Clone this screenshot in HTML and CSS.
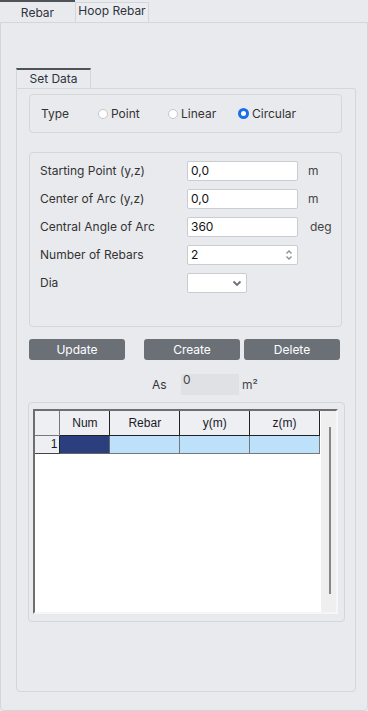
FILE: index.html
```html
<!DOCTYPE html>
<html>
<head>
<meta charset="utf-8">
<link rel="stylesheet" href="styles.css">
</head>
<body>
<div class="tabs">
  <div class="tab active">Rebar</div>
  <div class="tab">Hoop Rebar</div>
</div>
<div class="outer">
  <div class="tabs inner-tabs">
    <div class="tab active sub">Set Data</div>
  </div>
  <div class="inner">
    <div class="box type-box">
      <span class="type-label">Type</span>
      <label class="radio r1"><span class="dot"></span>Point</label>
      <label class="radio r2"><span class="dot"></span>Linear</label>
      <label class="radio r3"><span class="dot on"></span>Circular</label>
    </div>
    <div class="box data-box">
      <div class="row"><span class="lbl">Starting Point (y,z)</span><span class="field">0,0</span><span class="unit">m</span></div>
      <div class="row"><span class="lbl">Center of Arc (y,z)</span><span class="field">0,0</span><span class="unit">m</span></div>
      <div class="row"><span class="lbl">Central Angle of Arc</span><span class="field">360</span><span class="unit deg">deg</span></div>
      <div class="row"><span class="lbl">Number of Rebars</span><span class="field spin">2<svg class="spinner" width="8" height="12" viewBox="0 0 8 12"><path d="M1.5 4.5 L4 2 L6.5 4.5" fill="none" stroke="#8a8d93" stroke-width="1.3"/><path d="M1.5 7.5 L4 10 L6.5 7.5" fill="none" stroke="#8a8d93" stroke-width="1.3"/></svg></span></div>
      <div class="row"><span class="lbl">Dia</span><span class="field sel"><svg width="10" height="7" viewBox="0 0 10 7"><path d="M1.5 1.5 L5 5 L8.5 1.5" fill="none" stroke="#6b6f76" stroke-width="1.8"/></svg></span></div>
    </div>
    <div class="buttons">
      <div class="btn b-update">Update</div>
      <div class="btn b-create">Create</div>
      <div class="btn b-delete">Delete</div>
    </div>
    <div class="as-row">
      <span class="as-lbl">As</span>
      <span class="as-field">0</span>
      <span class="as-unit">m²</span>
    </div>
    <div class="box table-box">
      <div class="grid-frame">
        <div class="grid">
          <table>
            <tr class="hdr"><th class="rh"></th><th class="c-num">Num</th><th class="c-w">Rebar</th><th class="c-w">y(m)</th><th class="c-w">z(m)</th></tr>
            <tr class="r"><td class="rh">1</td><td class="sel-cell"></td><td class="lb"></td><td class="lb"></td><td class="lb"></td></tr>
          </table>
        </div>
        <div class="vscroll"><div class="thumb"></div></div>
      </div>
    </div>
  </div>
</div>
</body>
</html>
```
FILE: styles.css
```css
* { box-sizing: border-box; }
html, body { margin: 0; padding: 0; }
body {
  width: 368px;
  height: 711px;
  background: #e9eaee;
  font-family: Inter, "Noto Sans", sans-serif;
  font-size: 12px;
  color: #333;
  overflow: hidden;
}
.tabs { display: flex; height: 22px; }
.tab {
  width: 75px;
  height: 22px;
  text-align: center;
  line-height: 20px;
  color: #2e3440;
  font-size: 12px;
}
.tab.active {
  border-top: 2px solid #4f5257;
  line-height: 21px;
}
.tabs > .tab:not(.active) {
  width: 74px;
  margin-top: 2px;
  height: 20px;
  line-height: 20px;
  border: 1px solid #d4d6db;
  border-bottom: none;
  background: #ebecef;
  line-height: 16px;
}
.outer {
  height: 689px;
  border: 1px solid #d4d6db;
  border-radius: 0 0 4px 4px;
  padding: 45px 11px 18px 15px;
  display: flex;
  flex-direction: column;
}
.inner-tabs { height: 20px; }
.tab.sub {
  width: 75px;
  height: 20px;
  line-height: 18px;
  border-left: 1px solid #d4d6db;
  border-right: 1px solid #d4d6db;
  color: #2e3440;
}
.inner {
  flex: 1;
  border: 1px solid #d4d6db;
  border-radius: 0 2px 4px 4px;
  padding: 5px 13px 0 12px;
  display: flex;
  flex-direction: column;
}
.box {
  border: 1px solid #d4d6db;
  border-radius: 4px;
}
.type-box {
  height: 39px;
  display: flex;
  align-items: center;
  padding-left: 11px;
  color: #333;
}
.type-label { width: 57px; }
.radio { display: flex; align-items: center; color: #333; }
.r1 { width: 70px; }
.r2 { width: 70px; }
.dot {
  width: 10px; height: 10px;
  border-radius: 50%;
  border: 1px solid #c4c7cc;
  background: #fff;
  margin-right: 3px;
}
.dot.on {
  width: 11px; height: 11px;
  border: 3px solid #1a6fe8;
  margin-right: 3px;
}
.data-box {
  margin-top: 19px;
  height: 175px;
  padding: 8px 0 0 10px;
}
.row {
  height: 28px;
  display: flex;
  align-items: flex-start;
}
.lbl { width: 147px; line-height: 20px; color: #333; }
.field {
  width: 111px;
  height: 20px;
  background: #fff;
  border: 1px solid #c9ccd1;
  border-radius: 2px;
  padding-left: 3px;
  line-height: 18px;
  color: #111;
  display: flex;
  align-items: center;
  position: relative;
}
.spin { justify-content: space-between; padding-right: 4px; }
.sel { width: 60px; justify-content: flex-end; padding-right: 4px; }
.unit { margin-left: 10px; line-height: 20px; color: #444; }
.unit.deg { margin-left: 12px; }
.buttons {
  display: flex;
  margin-top: 12px;
  height: 21px;
}
.btn {
  width: 96px;
  height: 21px;
  background: #6b7077;
  color: #fff;
  border-radius: 3px;
  text-align: center;
  line-height: 21px;
  font-size: 12px;
}
.b-create { margin-left: 19px; }
.b-delete { margin-left: 4px; }
.as-row {
  display: flex;
  align-items: center;
  margin-top: 14px;
  height: 21px;
}
.as-lbl { margin-left: 123px; width: 29px; color: #333; }
.as-field {
  width: 58px;
  height: 21px;
  background: #dfe1e5;
  align-self: flex-start;
  padding-left: 2px;
  line-height: 12px;
  color: #444;
}
.as-unit { margin-left: 3px; color: #444; }
.table-box {
  margin-top: 7px;
  margin-left: -1px;
  margin-right: -3px;
  height: 220px;
  padding: 6px 6px 8px 4px;
}
.grid-frame {
  height: 205px;
  display: flex;
  border-left: 2px solid #6e6e6e;
  border-top: 2px solid #6e6e6e;
  border-right: 2px solid #f6f6f6;
  border-bottom: 2px solid #f6f6f6;
  background: #fff;
}
.grid { width: 285px; }
table {
  border-collapse: collapse;
  font-family: "Liberation Sans", Arial, sans-serif;
  font-size: 12px;
  color: #1a1a2a;
}
th, td { padding: 0; }
.hdr th {
  height: 24px;
  background: #eeeff2;
  font-weight: normal;
  border-right: 1px solid #222;
  border-bottom: 1px solid #222;
  text-align: center;
}
.hdr th.rh { width: 25px; border-right: 1px solid #777; border-bottom: 1px solid #777; }
.c-num { width: 50px; }
.c-w { width: 70px; }
.r td { height: 18px; }
.r td.rh {
  background: #eeeff2;
  text-align: right;
  padding-right: 2px;
  border-right: 1px solid #222;
  border-bottom: 1px solid #444;
}
.sel-cell { background: #2b3e7d; border-right: 1px solid #666; border-bottom: 1px solid #666; }
.lb { background: #bee1fb; border-right: 1px solid #777; border-bottom: 1px solid #777; }
.vscroll {
  flex: 1;
  background: #efefef;
  margin-left: 1px;
  position: relative;
}
.thumb {
  position: absolute;
  left: 8px;
  top: 16px;
  width: 2px;
  height: 167px;
  background: #888;
}
```
